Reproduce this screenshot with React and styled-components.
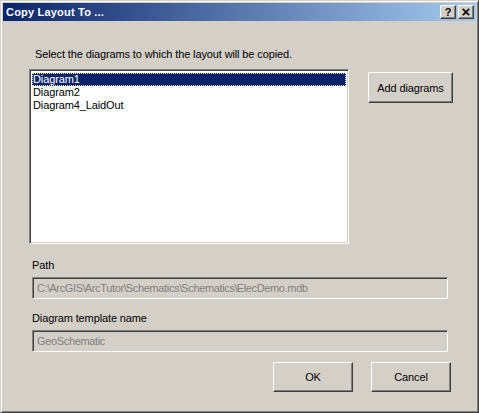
import React, { useState } from "react";
import styled, { createGlobalStyle } from "styled-components";

const GlobalStyle = createGlobalStyle`
  html, body {
    margin: 0;
    padding: 0;
    background: #d4d0c8;
  }
  * {
    box-sizing: border-box;
  }
`;

const diagrams = ["Diagram1", "Diagram2", "Diagram4_LaidOut"];

// path parts, the backslashes are drawn narrower like the dialog font
const pathParts = ["C:", "ArcGIS", "ArcTutor", "Schematics", "Schematics", "ElecDemo.mdb"];

function App() {
  const [selected, setSelected] = useState(0);

  return (
    <>
      <GlobalStyle />
      <Window>
        <TitleBar>
          <Title>Copy Layout To ...</Title>
          <TitleButtons>
            <CaptionButton>?</CaptionButton>
            <CaptionButton $close>×</CaptionButton>
          </TitleButtons>
        </TitleBar>

        <Content>
          <Intro>Select the diagrams to which the layout will be copied.</Intro>

          <ListRow>
            <ListBox>
              {diagrams.map((name, i) => (
                <ListItem key={name} $selected={i === selected} onClick={() => setSelected(i)}>
                  {name}
                </ListItem>
              ))}
            </ListBox>
            <Button $width={85} $height={31}>Add diagrams</Button>
          </ListRow>

          <FieldGroup>
            <FieldLabel>Path</FieldLabel>
            <TextField>
              {pathParts.map((part, i) => (
                <React.Fragment key={i}>
                  {i > 0 && <Slash>\</Slash>}
                  {part}
                </React.Fragment>
              ))}
            </TextField>
          </FieldGroup>

          <FieldGroup>
            <FieldLabel>Diagram template name</FieldLabel>
            <TextField>GeoSchematic</TextField>
          </FieldGroup>

          <Footer>
            <Button $width={80} $height={30}>OK</Button>
            <Button $width={80} $height={30}>Cancel</Button>
          </Footer>
        </Content>
      </Window>
    </>
  );
}

const Window = styled.div`
  width: 479px;
  height: 413px;
  background: #d4d0c8;
  border: 1px solid;
  border-color: #d4d0c8 #404040 #404040 #d4d0c8;
  box-shadow: inset 1px 1px #ffffff, inset -1px -1px #808080;
  padding: 2px;
  display: flex;
  flex-direction: column;
  font-family: "Liberation Sans", Arial, sans-serif;
  font-size: 11px;
  color: #000;
`;

const TitleBar = styled.div`
  height: 18px;
  display: flex;
  align-items: center;
  justify-content: space-between;
  background: linear-gradient(to right, #0a246a, #a6caf0);
  padding: 0 2px 0 3px;
`;

const Title = styled.span`
  color: #fff;
  font-weight: bold;
  font-size: 11px;
  letter-spacing: 0.2px;
`;

const TitleButtons = styled.div`
  display: flex;
  gap: 2px;
`;

const CaptionButton = styled.div`
  width: 16px;
  height: 14px;
  background: #d4d0c8;
  border: 1px solid;
  border-color: #ffffff #404040 #404040 #ffffff;
  box-shadow: inset -1px -1px #808080;
  display: flex;
  align-items: center;
  justify-content: center;
  font-weight: bold;
  font-size: ${(p) => (p.$close ? "15px" : "11px")};
  line-height: 1;
  color: #000;
  padding-bottom: ${(p) => (p.$close ? "1px" : "0")};
`;

const Content = styled.div`
  flex: 1;
  display: flex;
  flex-direction: column;
  padding: 27px 0 0 26px;
  letter-spacing: -0.12px;
`;

const Intro = styled.div`
  padding-left: 6px;
  height: 13px;
  line-height: 13px;
`;

const ListRow = styled.div`
  display: flex;
  align-items: flex-start;
  gap: 19px;
  margin-top: 8px;
`;

const ListBox = styled.div`
  width: 320px;
  height: 175px;
  background: #fff;
  border: 1px solid;
  border-color: #808080 #ffffff #ffffff #808080;
  box-shadow: inset 1px 1px #404040, inset -1px -1px #d4d0c8;
  padding: 3px 2px;
  display: flex;
  flex-direction: column;
  & + button {
    margin-top: 3px;
  }
`;

const ListItem = styled.div`
  height: 13px;
  line-height: 12px;
  padding-left: 1px;
  cursor: default;
  background: ${(p) => (p.$selected ? "#0a246a" : "transparent")};
  color: ${(p) => (p.$selected ? "#fff" : "#000")};
  outline: ${(p) => (p.$selected ? "1px dotted #e8e0a0" : "none")};
  outline-offset: -1px;
`;

const Button = styled.button`
  width: ${(p) => p.$width}px;
  height: ${(p) => p.$height}px;
  background: #d4d0c8;
  border: 1px solid;
  border-color: #ffffff #404040 #404040 #ffffff;
  box-shadow: inset -1px -1px #808080;
  font-family: "Liberation Sans", Arial, sans-serif;
  font-size: 11px;
  letter-spacing: -0.12px;
  color: #000;
  padding: 0;
  flex-shrink: 0;
`;

const FieldGroup = styled.div`
  display: flex;
  flex-direction: column;
  padding-left: 3px;
  margin-top: 15px;
  & + & {
    margin-top: 13px;
  }
`;

const FieldLabel = styled.div`
  height: 13px;
  line-height: 13px;
`;

const TextField = styled.div`
  width: 416px;
  height: 22px;
  margin-top: 5px;
  border: 1px solid;
  border-color: #808080 #ffffff #ffffff #808080;
  box-shadow: inset 1px 1px #404040, inset -1px -1px #d4d0c8;
  padding: 0 4px;
  display: flex;
  align-items: center;
  color: #808080;
  letter-spacing: -0.35px;
  white-space: pre;
  overflow: hidden;
`;

const Slash = styled.span`
  letter-spacing: -2px;
  margin-right: 1px;
`;

const Footer = styled.div`
  display: flex;
  justify-content: flex-end;
  gap: 18px;
  margin-top: 10px;
  padding-right: 25px;
`;

export default App;
